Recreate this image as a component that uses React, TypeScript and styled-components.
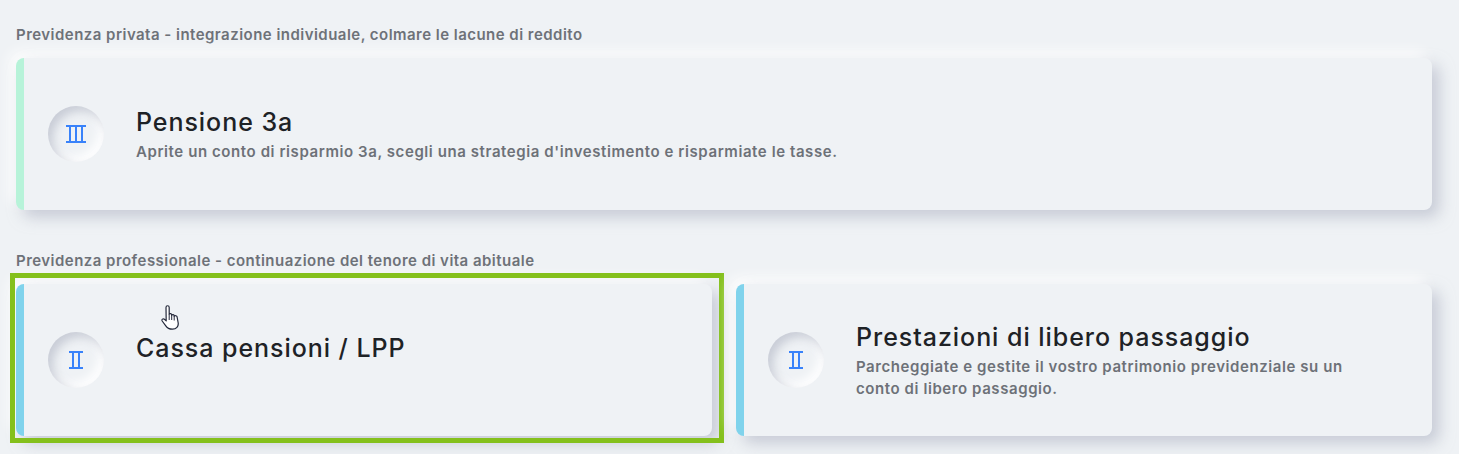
import React from 'react';
import styled, { createGlobalStyle } from 'styled-components';

const Global = createGlobalStyle`
  html, body { margin: 0; padding: 0; background: #eff2f5; }
  body { font-family: "Inter", "Liberation Sans", sans-serif; overflow: hidden; }
`;

const Page = styled.main`
  width: 1459px;
  height: 454px;
  box-sizing: border-box;
  padding: 26px 27px 0 16px;
  display: flex;
  flex-direction: column;
`;

const SectionTitle = styled.h2`
  margin: 0 0 14px;
  height: 18px;
  font-size: 15px;
  line-height: 18px;
  font-weight: 600;
  letter-spacing: 0.47px;
  color: #6d7178;
  white-space: nowrap;
`;

const CardGrid = styled.div<{ $columns: number }>`
  display: grid;
  grid-template-columns: repeat(${p => p.$columns}, 1fr);
  gap: 24px;
  margin-bottom: 42px;
`;

const Card = styled.article<{ $accent: string }>`
  position: relative;
  height: 152px;
  box-sizing: border-box;
  display: flex;
  align-items: center;
  gap: 32px;
  padding: 0 72px 0 24px;
  background: #eff2f5;
  border-left: 8px solid ${p => p.$accent};
  border-radius: 8px;
  box-shadow: 7px 7px 15px rgba(172, 178, 194, 0.62), -6px -6px 14px rgba(255, 255, 255, 0.95);
`;

const Medallion = styled.div`
  flex: 0 0 56px;
  width: 56px;
  height: 56px;
  border-radius: 50%;
  display: flex;
  align-items: center;
  justify-content: center;
  background: #eff2f5;
  box-shadow: inset 5px 5px 10px rgba(180, 184, 198, 0.65), inset -5px -5px 10px rgba(255, 255, 255, 0.95);
`;

const Body = styled.div`
  display: flex;
  flex-direction: column;
  gap: 2px;
`;

const CardTitle = styled.h3`
  margin: 0;
  font-size: 25px;
  line-height: 34px;
  font-weight: 500;
  letter-spacing: 0.95px;
  color: #1e2226;
`;

const CardText = styled.p`
  margin: 0;
  min-height: 22px;
  font-size: 15px;
  line-height: 22px;
  font-weight: 600;
  letter-spacing: 0.58px;
  color: #6d7178;
`;

const Highlight = styled.div`
  position: absolute;
  left: -14px;
  top: -11px;
  right: -12px;
  bottom: -7px;
  border: 5px solid #84c01c;
  pointer-events: none;
`;

const Cursor = styled.svg`
  position: absolute;
  left: 137px;
  top: 21px;
  width: 19px;
  height: 25px;
`;

const Numeral = ({ count }: { count: number }) => {
  const width = count === 3 ? 20 : 14;
  const xs = count === 3 ? [3, 9, 15] : [3, 9];
  return (
    <svg width={width} height="18" viewBox={`0 0 ${width} 18`} fill="#3982fa" aria-hidden="true">
      <rect x="0" y="0" width={width} height="2" />
      <rect x="0" y="16" width={width} height="2" />
      {xs.map(x => <rect key={x} x={x} y="1" width="2" height="16" />)}
    </svg>
  );
};

const Hand = () => (
  <Cursor viewBox="0 0 19 25" aria-hidden="true">
    <path
      d="M5 2.4C5 .2 8.2 .2 8.2 2.4V9.2C8.8 8.3 10.4 8.4 10.7 9.6V10.2C11.3 9.2 13 9.4 13.2 10.6V11.2C13.9 10.3 15.8 10.6 16.1 12L17.2 18C17.6 21.6 15.4 24.2 11.4 24.2 8 24.2 6.2 23 4.6 20.6L1.2 16C.3 14.6 2 13.1 3.4 14.2L5.2 15.9Z"
      fill="#fff"
      stroke="#23283a"
      strokeWidth="1.2"
      strokeLinejoin="round"
    />
    <path d="M8.2 9.2V15M10.7 10V15M13.2 11V15.5" fill="none" stroke="#23283a" strokeWidth="1" />
  </Cursor>
);

export default function App() {
  return (
    <>
      <Global />
      <Page>
        <SectionTitle>Previdenza privata - integrazione individuale, colmare le lacune di reddito</SectionTitle>
        <CardGrid $columns={1}>
          <Card $accent="#b7f3d9">
            <Medallion><Numeral count={3} /></Medallion>
            <Body>
              <CardTitle>Pensione 3a</CardTitle>
              <CardText>Aprite un conto di risparmio 3a, scegli una strategia d'investimento e risparmiate le tasse.</CardText>
            </Body>
          </Card>
        </CardGrid>
        <SectionTitle>Previdenza professionale - continuazione del tenore di vita abituale</SectionTitle>
        <CardGrid $columns={2}>
          <Card $accent="#80d3ec">
            <Medallion><Numeral count={2} /></Medallion>
            <Body>
              <CardTitle>Cassa pensioni / LPP</CardTitle>
              <CardText />
            </Body>
            <Hand />
            <Highlight />
          </Card>
          <Card $accent="#80d3ec">
            <Medallion><Numeral count={2} /></Medallion>
            <Body>
              <CardTitle>Prestazioni di libero passaggio</CardTitle>
              <CardText>Parcheggiate e gestite il vostro patrimonio previdenziale su un conto di libero passaggio.</CardText>
            </Body>
          </Card>
        </CardGrid>
      </Page>
    </>
  );
}
